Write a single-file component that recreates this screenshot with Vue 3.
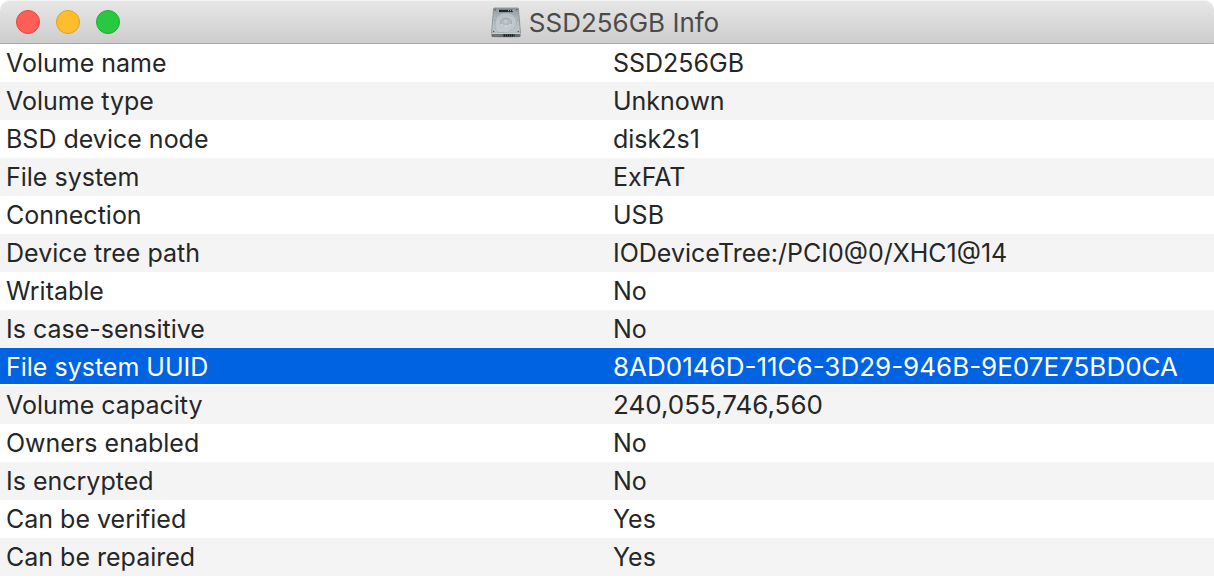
<script setup>
const controls = [
  { name: 'Close', kind: 'close' },
  { name: 'Minimize', kind: 'minimize' },
  { name: 'Zoom', kind: 'zoom' },
]

const rows = [
  ['Volume name', 'SSD256GB'],
  ['Volume type', 'Unknown'],
  ['BSD device node', 'disk2s1'],
  ['File system', 'ExFAT'],
  ['Connection', 'USB'],
  ['Device tree path', 'IODeviceTree:/PCI0@0/XHC1@14'],
  ['Writable', 'No'],
  ['Is case-sensitive', 'No'],
  ['File system UUID', '8AD0146D-11C6-3D29-946B-9E07E75BD0CA'],
  ['Volume capacity', '240,055,746,560'],
  ['Owners enabled', 'No'],
  ['Is encrypted', 'No'],
  ['Can be verified', 'Yes'],
  ['Can be repaired', 'Yes'],
]
const selected = 'File system UUID'

// Values that start with a digit are identifiers or sizes.
const isNumeric = (value) => /^\d/.test(value)
</script>

<template>
  <main class="window">
    <header class="titlebar">
      <div class="controls">
        <button
          v-for="c in controls"
          :key="c.kind"
          type="button"
          :class="['control', c.kind]"
          :aria-label="c.name"
        ></button>
      </div>
      <h1 class="title">
        <svg class="drive" viewBox="1 -2 30 34" preserveAspectRatio="none" aria-hidden="true">
          <defs>
            <linearGradient id="plate" x1="0" y1="0" x2="0" y2="1">
              <stop offset="0" stop-color="#8f999f" />
              <stop offset="0.5" stop-color="#b3bdc2" />
              <stop offset="1" stop-color="#bcc4c8" />
            </linearGradient>
            <linearGradient id="front" x1="0" y1="0" x2="0" y2="1">
              <stop offset="0" stop-color="#9ba1a4" />
              <stop offset="1" stop-color="#65696b" />
            </linearGradient>
          </defs>
          <path d="M2 30h28v1q-14 1.500-28 0z" fill="#8d8d8d" opacity="0.5" />
          <path d="M3.500 1q0-1 1-1h23q1 0 1 1l2 26v3q0 1-1 1h-27q-1 0-1-1v-3z" fill="url(#front)" />
          <path d="M3.500 1q0-1 1-1h23q1 0 1 1l2 26h-29z" fill="url(#plate)" stroke="#7d878c" stroke-width="0.600" />
          <path d="M8 8q8-6 16 0 3 4 2 9-1 5-5 6l-3 3H8l-2-3q-2-10 2-15z" fill="#ccd4d8" opacity="0.500" stroke="#8c969b" stroke-width="0.500" />
          <ellipse cx="16" cy="15.500" rx="5.500" ry="4.500" fill="#b2bbc0" stroke="#909ba0" stroke-width="0.700" />
          <path d="M11 17.500q5 4.500 10 0" fill="none" stroke="#e4eaed" stroke-width="1" />
          <ellipse cx="15.500" cy="14.500" rx="2" ry="1.500" fill="#c3cbcf" />
          <path d="M9 2h14v2.500H9z" fill="#222629" />
          <path d="M18 3h1m1 0h1m1 0h1" stroke="#dfe5e8" stroke-width="0.800" />
          <g fill="#52595d">
            <circle cx="5.200" cy="2" r="0.800" />
            <circle cx="26.800" cy="2" r="0.800" />
            <circle cx="3.700" cy="25" r="0.800" />
            <circle cx="28.300" cy="25" r="0.800" />
            <circle cx="4.500" cy="13" r="0.500" />
            <circle cx="27.500" cy="13" r="0.500" />
          </g>
          <path d="M1.500 27.200h29" stroke="#dfe4e6" stroke-width="0.800" />
          <path d="M4 28.300h7v1.700H4z" fill="#74797b" />
          <path d="M13.500 28h11v2.500h-11z" fill="#17191a" />
          <path d="M15.500 28v2.500m2-2.500v2.500m2-2.500v2.500m2-2.500v2.500m2-2.500v2.500" stroke="#7d8487" stroke-width="0.500" />
        </svg>
        <span>SSD256GB Info</span>
      </h1>
    </header>
    <table class="info">
      <tbody>
        <tr v-for="[label, value] in rows" :key="label" :class="{ selected: label === selected }">
          <th scope="row"><div class="cell">{{ label }}</div></th>
          <td><div class="cell" :class="{ numeric: isNumeric(value) }">{{ value }}</div></td>
        </tr>
      </tbody>
    </table>
  </main>
</template>

<style>
body {
  background: #fff;
}
</style>

<style scoped>
.window {
  font-family: Inter, "Liberation Sans", sans-serif;
  font-size: 25px;
  color: #262626;
  background: #fff;
}

.titlebar {
  display: grid;
  grid-template-columns: 1fr auto 1fr;
  align-items: center;
  height: 44px;
  box-sizing: border-box;
  padding: 0 20px 0 16px;
  border-bottom: 1px solid #a9a9a9;
  border-radius: 10px 10px 0 0;
  background: linear-gradient(#e7e7e7, #cdcdcd);
  box-shadow: inset 0 1px 0 #f3f3f3;
}

.controls {
  display: flex;
  gap: 16px;
}

.control {
  width: 24px;
  height: 24px;
  padding: 0;
  border: 1px solid;
  border-radius: 50%;
}

.close {
  background: #ff5f57;
  border-color: #e2463f;
}

.minimize {
  background: #ffbd2e;
  border-color: #dfa023;
}

.zoom {
  background: #28c940;
  border-color: #1dad2b;
}

.title {
  display: flex;
  align-items: center;
  gap: 8px;
  margin: 0;
  font-size: 26px;
  font-weight: 400;
  line-height: 32px;
  color: #4b4b4b;
}

.title span {
  padding-top: 2px;
}

.drive {
  width: 30px;
  height: 32px;
}

.info {
  width: 100%;
  table-layout: fixed;
  border-collapse: collapse;
}

th,
td {
  padding: 0;
  font-weight: 400;
  text-align: left;
}

.cell {
  height: 38px;
  padding-left: 6px;
  line-height: 38px;
  white-space: nowrap;
}

.numeric {
  font-size: 26px;
}

tr:nth-child(even) {
  background: #f4f4f4;
}

tr.selected {
  color: #fff;
  background: linear-gradient(#0063e1 36px, #fff 36px);
}
</style>
